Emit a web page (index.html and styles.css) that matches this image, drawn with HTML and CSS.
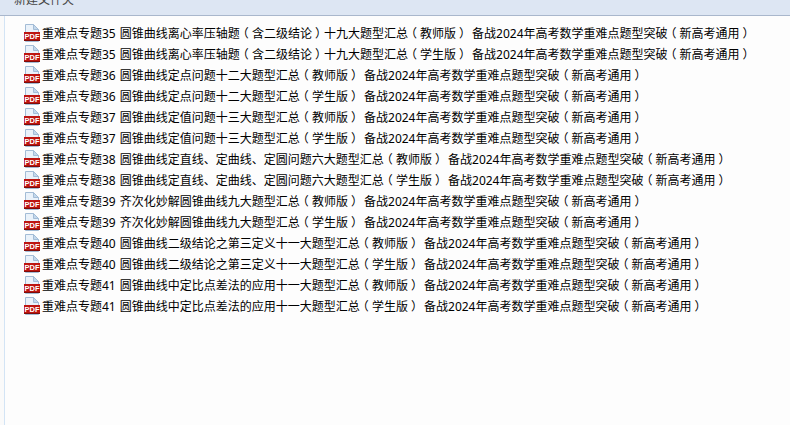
FILE: index.html
```html
<!DOCTYPE html>
<html>
	<head>
		<title>新建文件夹</title>
		<link rel="stylesheet" href="styles.css">
	</head>
	<body>
		<svg class="defs" width="0" height="0">
			<symbol id="pdf" viewBox="0 0 16 18">
				<path d="M1.5 .5H9.5L14.5 5.5V17.5H1.5Z" fill="#eaf2fa" stroke="#a3bcd6"/>
				<path d="M9.5 .5V5.5H14.5Z" fill="#c3d8ec" stroke="#a3bcd6"/>
				<rect x="0" y="8" width="16" height="9" fill="#bd1510"/>
				<rect x="0" y="16" width="16" height="1" fill="#7d0d0a"/>
				<text x="8" y="15" class="pdf-label">PDF</text>
			</symbol>
		</svg>

		<header class="toolbar">
			<span class="toolbar-title">新建文件夹</span>
		</header>

		<div class="main">
			<div class="nav"></div>
			<ul class="files">
				<li><svg class="icon"><use href="#pdf"/></svg><span>重难点专题35 圆锥曲线离心率压轴题<b>（</b>含二级结论<b>）</b>十九大题型汇总<b>（</b>教师版<b>）</b> 备战2024年高考数学重难点题型突破<b>（</b>新高考通用<b>）</b></span></li>
				<li><svg class="icon"><use href="#pdf"/></svg><span>重难点专题35 圆锥曲线离心率压轴题<b>（</b>含二级结论<b>）</b>十九大题型汇总<b>（</b>学生版<b>）</b> 备战2024年高考数学重难点题型突破<b>（</b>新高考通用<b>）</b></span></li>
				<li><svg class="icon"><use href="#pdf"/></svg><span>重难点专题36 圆锥曲线定点问题十二大题型汇总<b>（</b>教师版<b>）</b> 备战2024年高考数学重难点题型突破<b>（</b>新高考通用<b>）</b></span></li>
				<li><svg class="icon"><use href="#pdf"/></svg><span>重难点专题36 圆锥曲线定点问题十二大题型汇总<b>（</b>学生版<b>）</b> 备战2024年高考数学重难点题型突破<b>（</b>新高考通用<b>）</b></span></li>
				<li><svg class="icon"><use href="#pdf"/></svg><span>重难点专题37 圆锥曲线定值问题十三大题型汇总<b>（</b>教师版<b>）</b> 备战2024年高考数学重难点题型突破<b>（</b>新高考通用<b>）</b></span></li>
				<li><svg class="icon"><use href="#pdf"/></svg><span>重难点专题37 圆锥曲线定值问题十三大题型汇总<b>（</b>学生版<b>）</b> 备战2024年高考数学重难点题型突破<b>（</b>新高考通用<b>）</b></span></li>
				<li><svg class="icon"><use href="#pdf"/></svg><span>重难点专题38 圆锥曲线定直线、定曲线、定圆问题六大题型汇总<b>（</b>教师版<b>）</b> 备战2024年高考数学重难点题型突破<b>（</b>新高考通用<b>）</b></span></li>
				<li><svg class="icon"><use href="#pdf"/></svg><span>重难点专题38 圆锥曲线定直线、定曲线、定圆问题六大题型汇总<b>（</b>学生版<b>）</b> 备战2024年高考数学重难点题型突破<b>（</b>新高考通用<b>）</b></span></li>
				<li><svg class="icon"><use href="#pdf"/></svg><span>重难点专题39 齐次化妙解圆锥曲线九大题型汇总<b>（</b>教师版<b>）</b> 备战2024年高考数学重难点题型突破<b>（</b>新高考通用<b>）</b></span></li>
				<li><svg class="icon"><use href="#pdf"/></svg><span>重难点专题39 齐次化妙解圆锥曲线九大题型汇总<b>（</b>学生版<b>）</b> 备战2024年高考数学重难点题型突破<b>（</b>新高考通用<b>）</b></span></li>
				<li><svg class="icon"><use href="#pdf"/></svg><span>重难点专题40 圆锥曲线二级结论之第三定义十一大题型汇总<b>（</b>教师版<b>）</b> 备战2024年高考数学重难点题型突破<b>（</b>新高考通用<b>）</b></span></li>
				<li><svg class="icon"><use href="#pdf"/></svg><span>重难点专题40 圆锥曲线二级结论之第三定义十一大题型汇总<b>（</b>学生版<b>）</b> 备战2024年高考数学重难点题型突破<b>（</b>新高考通用<b>）</b></span></li>
				<li><svg class="icon"><use href="#pdf"/></svg><span>重难点专题41 圆锥曲线中定比点差法的应用十一大题型汇总<b>（</b>教师版<b>）</b> 备战2024年高考数学重难点题型突破<b>（</b>新高考通用<b>）</b></span></li>
				<li><svg class="icon"><use href="#pdf"/></svg><span>重难点专题41 圆锥曲线中定比点差法的应用十一大题型汇总<b>（</b>学生版<b>）</b> 备战2024年高考数学重难点题型突破<b>（</b>新高考通用<b>）</b></span></li>
			</ul>
		</div>
	</body>
</html>
```

FILE: styles.css
```css
html, body {
	margin: 0;
	height: 100%;
	overflow: hidden;
}
body {
	background-color: #fdfdfd;
	color: #000;
	font-family: "Noto Sans", "Noto Sans CJK SC", sans-serif;
	font-size: 12px;
}
.defs {
	display: block;
	height: 0;
}
.pdf-label {
	fill: #fff;
	font-family: "Liberation Sans", sans-serif;
	font-size: 7.5px;
	font-weight: bold;
	text-anchor: middle;
}
.toolbar {
	height: 15px;
	background-color: #dde6f3;
	border-bottom: 1px solid #a9b7cc;
	padding-left: 14px;
	overflow: hidden;
}
.toolbar-title {
	display: block;
	line-height: 12px;
	margin-top: -6px;
	color: #444;
}
.main {
	display: flex;
	height: 409px;
}
.nav {
	width: 4px;
	background-color: #fafafa;
	border-right: 1px solid #d3e4f5;
}
.files {
	list-style: none;
	margin: 0;
	padding: 6px 0 0 19px;
}
.files li {
	display: flex;
	align-items: center;
	height: 21px;
	white-space: pre;
	word-spacing: 1px;
}
/* the fullwidth brackets sit centred in their cell here */
.files b {
	font-weight: normal;
	font-feature-settings: "halt";
	margin: 0 3px;
}
.icon {
	width: 16px;
	height: 18px;
	margin: 1px 2px 0 0;
	flex: none;
}
```
